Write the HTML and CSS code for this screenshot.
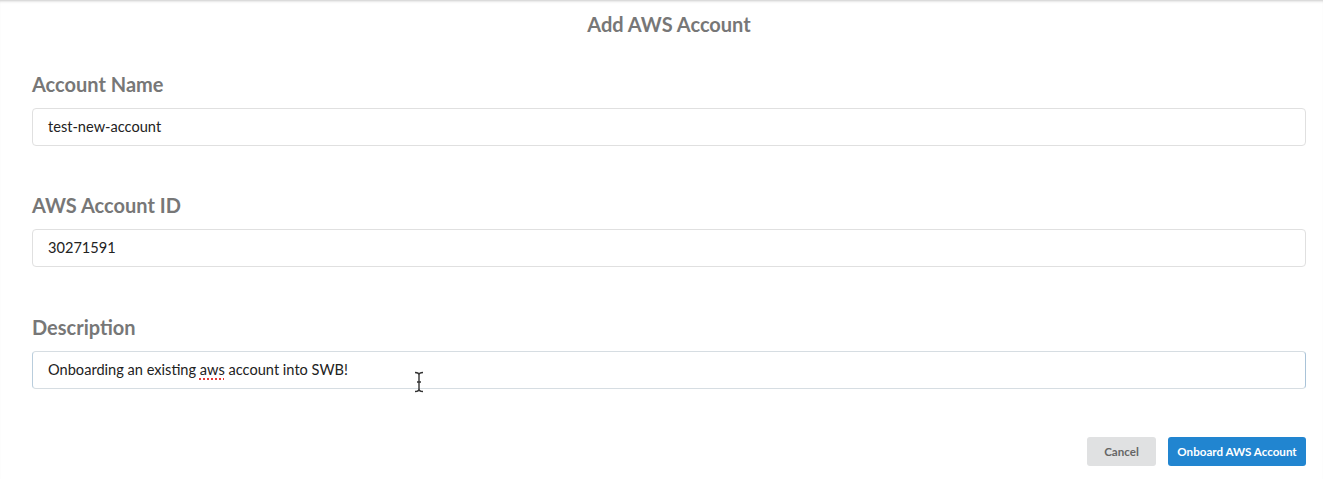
FILE: index.html
```html
<!DOCTYPE html>
<html lang="en">
<head>
<meta charset="utf-8">
<title>Add AWS Account</title>
<link rel="stylesheet" href="styles.css">
</head>
<body>
<div class="modal">
  <header class="modal-header">Add AWS Account</header>
  <form class="modal-form">
    <div class="field">
      <label class="field-label">Account Name</label>
      <div class="field-input">test-new-account</div>
    </div>
    <div class="field">
      <label class="field-label">AWS Account ID</label>
      <div class="field-input">30271591</div>
    </div>
    <div class="field field-last">
      <label class="field-label">Description</label>
      <div class="field-input focused">Onboarding an existing <span class="misspelled">aws</span> account into SWB!
        <svg class="ibeam" width="10" height="22" viewBox="0 0 10 22" aria-hidden="true">
          <path d="M1 1.5 Q5 1.5 5 4 Q5 1.5 9 1.5 M5 4 V18 M1 20.5 Q5 20.5 5 18 Q5 20.5 9 20.5 M3 11 H7" fill="none" stroke="#333" stroke-width="1.4"/>
        </svg>
      </div>
    </div>
    <div class="actions">
      <button type="button" class="btn btn-cancel">Cancel</button>
      <button type="button" class="btn btn-primary">Onboard AWS Account</button>
    </div>
  </form>
</div>
</body>
</html>
```
FILE: styles.css
```css
html, body {
  margin: 0;
  padding: 0;
  background: #ffffff;
}
body {
  font-family: Lato, "Open Sans", "Liberation Sans", sans-serif;
  color: #222;
}
.modal {
  width: 1323px;
  height: 479px;
  box-shadow: inset 0 3px 3px -2px rgba(0, 0, 0, 0.22);
}
.modal-header {
  text-align: center;
  font-size: 20px;
  font-weight: 700;
  color: #777;
  padding: 13px 17px 0 32px;
  line-height: 22px;
  height: 22px;
}
.modal-form {
  padding: 37px 17px 0 32px;
  display: flex;
  flex-direction: column;
}
.field {
  display: flex;
  flex-direction: column;
  margin-bottom: 47px;
}
.field-last {
  margin-top: 1px;
}
.field-label {
  font-size: 20px;
  font-weight: 700;
  color: #777;
  line-height: 24px;
  margin-bottom: 12px;
}
.field-input {
  position: relative;
  height: 38px;
  box-sizing: border-box;
  border: 1px solid #e0e0e0;
  border-radius: 4px;
  padding: 0 15px;
  font-size: 14.6px;
  line-height: 36px;
  color: #222;
}
.field-input.focused {
  border-color: #d6dde2 #a9c3d8 #d6dde2 #b9cddc;
}
.misspelled {
  text-decoration-line: underline;
  text-decoration-style: dotted;
  text-decoration-color: #e53935;
  text-decoration-thickness: 1.5px;
  text-underline-offset: 3px;
}
.ibeam {
  position: absolute;
  left: 381px;
  top: 19px;
}
.actions {
  display: flex;
  justify-content: flex-end;
  gap: 12px;
  margin-top: 1px;
}
.btn {
  font-family: Lato, "Open Sans", "Liberation Sans", sans-serif;
  font-size: 11.6px;
  font-weight: 700;
  height: 29px;
  border: none;
  border-radius: 3px;
  padding: 0;
  white-space: nowrap;
  cursor: pointer;
}
.btn-cancel {
  background: #e0e1e2;
  color: #666;
  width: 69px;
}
.btn-primary {
  background: #2185d0;
  color: #fff;
  width: 138px;
}
```
